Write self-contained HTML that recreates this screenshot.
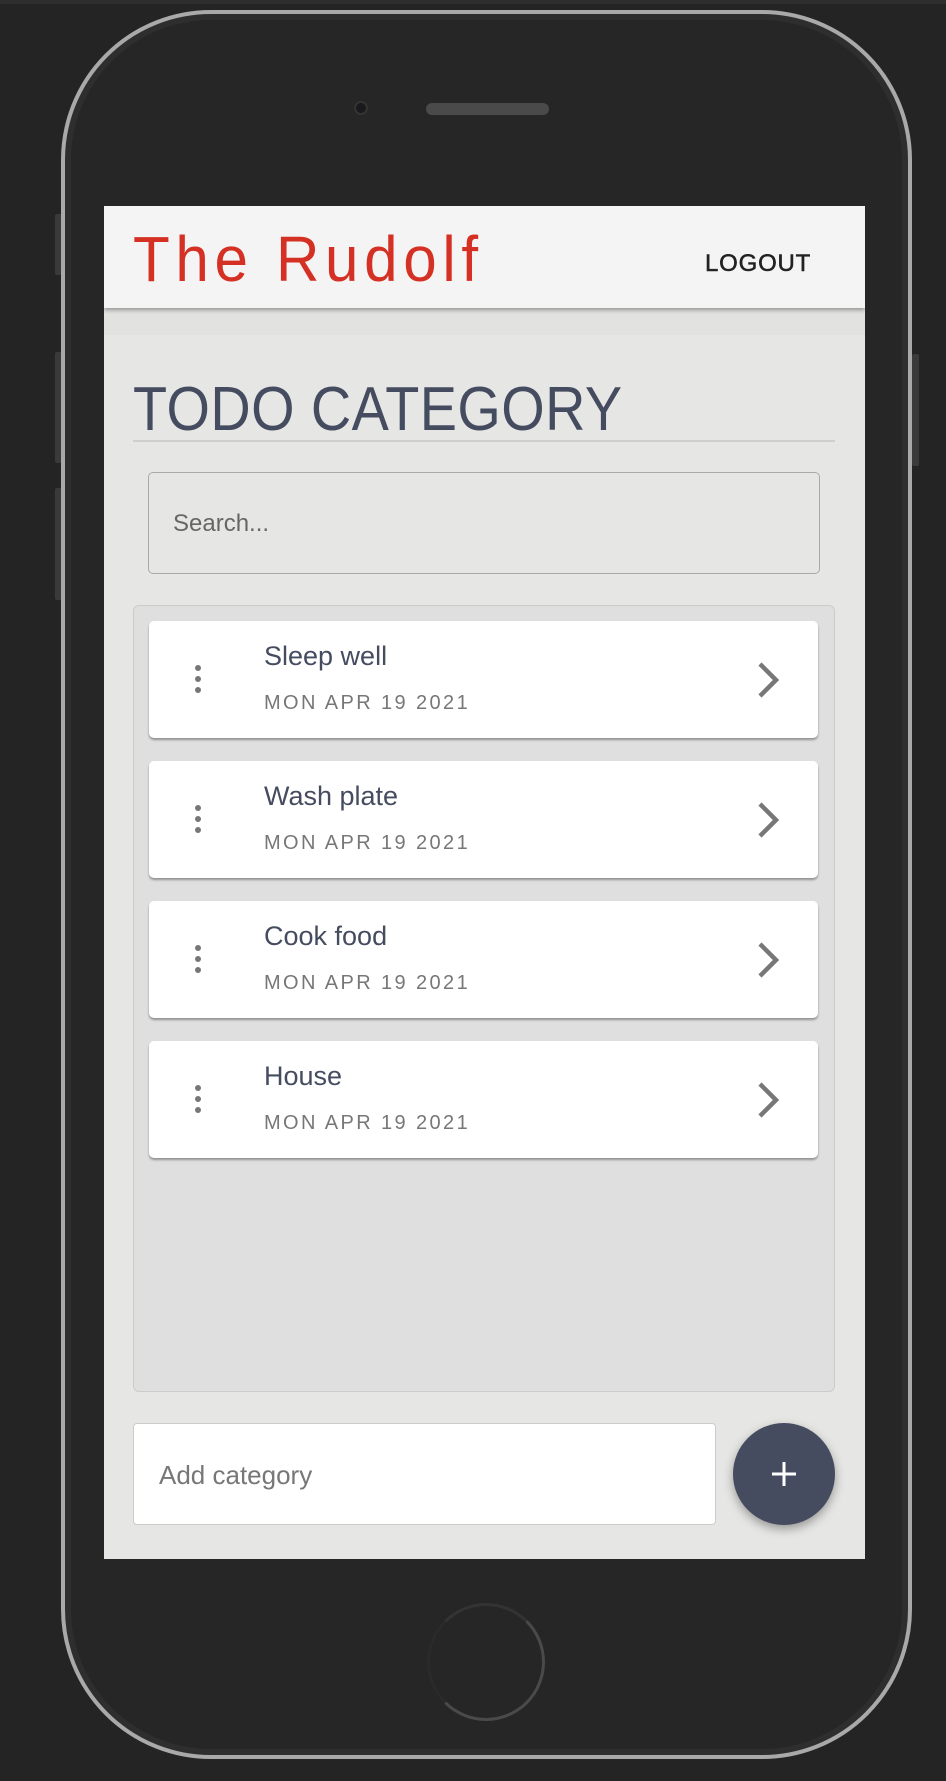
<!DOCTYPE html>
<html><head><meta charset="utf-8"><style>
*{box-sizing:border-box;margin:0;padding:0}
body{width:946px;height:1781px;background:#242424;position:relative;overflow:hidden;font-family:"Liberation Sans",sans-serif}
.abs{position:absolute}
.phone{left:61px;top:10px;width:851px;height:1749px;border:4px solid #a9a9a9;border-radius:150px;background:#262626;box-shadow:inset 0 0 0 6px #2e2e2e}
.btn{background:#3a3a3a;border-radius:2px}
.screen{left:104px;top:206px;width:761px;height:1353px;background:#e6e6e4;overflow:hidden}
.header{left:0;top:0;width:761px;height:102px;background:#f4f4f4;box-shadow:0 2px 4px rgba(0,0,0,.35);z-index:2}
.card{left:45px;width:669px;height:117px;background:#fff;border-radius:5px;box-shadow:0 2px 2px rgba(0,0,0,.35)}
.dot{width:6px;height:6px;border-radius:50%;background:#777;left:46px}
.t{left:115px;top:20px;font-size:27px;color:#454c60}
.d{left:115px;top:71px;font-size:20px;letter-spacing:2.4px;color:#777}
</style></head><body>
<div class="abs" style="left:0;top:0;width:946px;height:4px;background:#2e2e2e"></div>
<div class="abs btn" style="left:55px;top:214px;width:7px;height:61px"></div>
<div class="abs btn" style="left:55px;top:352px;width:7px;height:111px"></div>
<div class="abs btn" style="left:55px;top:488px;width:7px;height:112px"></div>
<div class="abs btn" style="left:912px;top:354px;width:7px;height:112px"></div>
<div class="abs phone"></div>
<div class="abs" style="left:354px;top:101px;width:14px;height:14px;border-radius:50%;background:#1a1a1e;border:2px solid #333"></div>
<div class="abs" style="left:426px;top:103px;width:123px;height:12px;border-radius:6px;background:#4a4a4a"></div>
<div class="abs" style="left:427px;top:1603px;width:118px;height:118px;border-radius:50%;border:3px solid #4a4a4a;border-left-color:#2a2a2a;border-top-color:#333"></div>

<div class="abs screen">
 <div class="abs header">
  <div class="abs" style="left:29px;top:16px;font-size:64px;letter-spacing:6px;color:#d53024;transform:scaleX(.94);transform-origin:left">The Rudolf</div>
  <div class="abs" style="left:601px;top:44px;font-size:24px;color:#222;letter-spacing:.8px;-webkit-text-stroke:.5px #222">LOGOUT</div>
 </div>
 <div class="abs" style="left:0;top:102px;width:761px;height:27px;background:#e2e2e0"></div>
 <div class="abs" style="left:29px;top:168px;font-size:62px;color:#454c60;letter-spacing:.5px;transform:scaleX(.9);transform-origin:left">TODO CATEGORY</div>
 <div class="abs" style="left:29px;top:234px;width:702px;height:2px;background:#cfcfcf"></div>
 <div class="abs" style="left:44px;top:266px;width:672px;height:102px;border:1.5px solid #aaa;border-radius:5px;background:#e6e6e4"></div>
 <div class="abs" style="left:69px;top:304px;font-size:24px;color:#666">Search...</div>
 <div class="abs" style="left:29px;top:399px;width:702px;height:787px;background:#dfdfdf;border:1.5px solid #ccc;border-radius:6px"></div>

 <div class="abs card" style="top:415px">
  <div class="abs dot" style="top:44px"></div><div class="abs dot" style="top:55px"></div><div class="abs dot" style="top:66px"></div>
  <div class="abs t">Sleep well</div><div class="abs d">MON APR 19 2021</div>
  <svg class="abs" style="left:605px;top:40px" width="28" height="38"><path d="M6 3L22 19L6 35" fill="none" stroke="#777" stroke-width="4.5"/></svg>
 </div>
 <div class="abs card" style="top:555px">
  <div class="abs dot" style="top:44px"></div><div class="abs dot" style="top:55px"></div><div class="abs dot" style="top:66px"></div>
  <div class="abs t">Wash plate</div><div class="abs d">MON APR 19 2021</div>
  <svg class="abs" style="left:605px;top:40px" width="28" height="38"><path d="M6 3L22 19L6 35" fill="none" stroke="#777" stroke-width="4.5"/></svg>
 </div>
 <div class="abs card" style="top:695px">
  <div class="abs dot" style="top:44px"></div><div class="abs dot" style="top:55px"></div><div class="abs dot" style="top:66px"></div>
  <div class="abs t">Cook food</div><div class="abs d">MON APR 19 2021</div>
  <svg class="abs" style="left:605px;top:40px" width="28" height="38"><path d="M6 3L22 19L6 35" fill="none" stroke="#777" stroke-width="4.5"/></svg>
 </div>
 <div class="abs card" style="top:835px">
  <div class="abs dot" style="top:44px"></div><div class="abs dot" style="top:55px"></div><div class="abs dot" style="top:66px"></div>
  <div class="abs t">House</div><div class="abs d">MON APR 19 2021</div>
  <svg class="abs" style="left:605px;top:40px" width="28" height="38"><path d="M6 3L22 19L6 35" fill="none" stroke="#777" stroke-width="4.5"/></svg>
 </div>

 <div class="abs" style="left:29px;top:1217px;width:583px;height:102px;background:#fff;border:1.5px solid #ccc;border-radius:4px"></div>
 <div class="abs" style="left:55px;top:1254px;font-size:26px;color:#777">Add category</div>
 <div class="abs" style="left:629px;top:1217px;width:102px;height:102px;border-radius:50%;background:#454c60;box-shadow:0 4px 10px rgba(0,0,0,.35)"></div>
 <svg class="abs" style="left:664px;top:1252px" width="32" height="32"><path d="M16 4V28M4 16H28" stroke="#fff" stroke-width="3"/></svg>
</div>
</body></html>
